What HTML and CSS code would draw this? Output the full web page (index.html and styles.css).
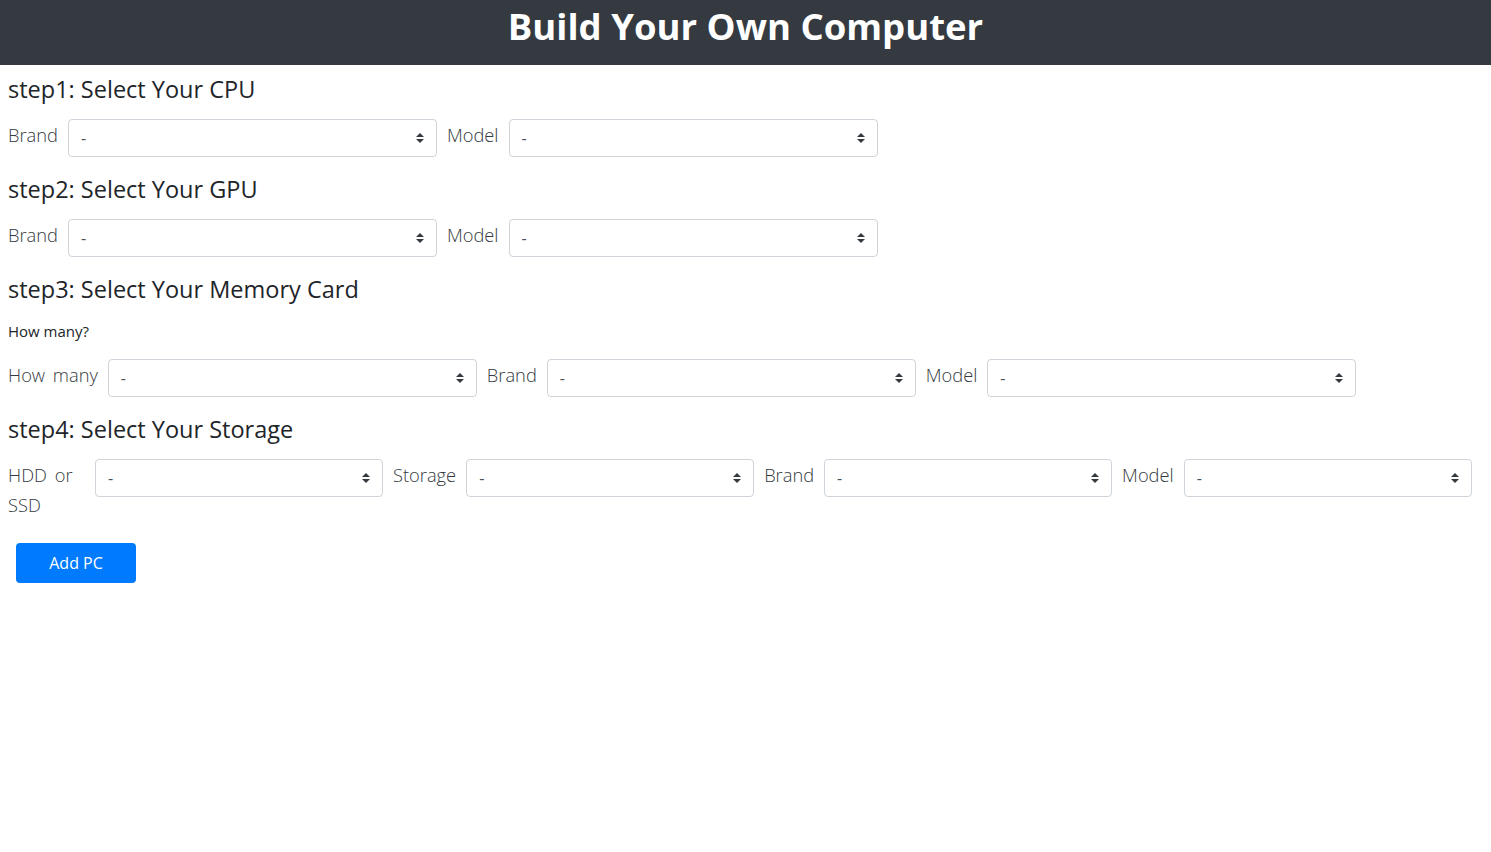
FILE: index.html
```html
<!DOCTYPE html>
<html lang="en">
<head>
<meta charset="utf-8">
<title>Build Your Own Computer</title>
<link rel="stylesheet" href="styles.css">
</head>
<body>
<header class="topbar">
  <h1 class="title">Build Your Own Computer</h1>
</header>
<main class="page">
  <section class="step">
    <h4 class="step-title">step1: Select Your CPU</h4>
    <div class="row">
      <label class="lbl">Brand</label>
      <span class="sel"><select><option>-</option></select><svg class="caret" viewBox="0 0 4 5" width="8" height="10"><path d="M2 0L0 2h4zm0 5L0 3h4z"/></svg></span>
      <label class="lbl">Model</label>
      <span class="sel"><select><option>-</option></select><svg class="caret" viewBox="0 0 4 5" width="8" height="10"><path d="M2 0L0 2h4zm0 5L0 3h4z"/></svg></span>
    </div>
  </section>
  <section class="step">
    <h4 class="step-title">step2: Select Your GPU</h4>
    <div class="row">
      <label class="lbl">Brand</label>
      <span class="sel"><select><option>-</option></select><svg class="caret" viewBox="0 0 4 5" width="8" height="10"><path d="M2 0L0 2h4zm0 5L0 3h4z"/></svg></span>
      <label class="lbl">Model</label>
      <span class="sel"><select><option>-</option></select><svg class="caret" viewBox="0 0 4 5" width="8" height="10"><path d="M2 0L0 2h4zm0 5L0 3h4z"/></svg></span>
    </div>
  </section>
  <section class="step">
    <h4 class="step-title">step3: Select Your Memory Card</h4>
    <p class="small-q">How many?</p>
    <div class="row">
      <label class="lbl">How many</label>
      <span class="sel"><select><option>-</option></select><svg class="caret" viewBox="0 0 4 5" width="8" height="10"><path d="M2 0L0 2h4zm0 5L0 3h4z"/></svg></span>
      <label class="lbl">Brand</label>
      <span class="sel"><select><option>-</option></select><svg class="caret" viewBox="0 0 4 5" width="8" height="10"><path d="M2 0L0 2h4zm0 5L0 3h4z"/></svg></span>
      <label class="lbl">Model</label>
      <span class="sel"><select><option>-</option></select><svg class="caret" viewBox="0 0 4 5" width="8" height="10"><path d="M2 0L0 2h4zm0 5L0 3h4z"/></svg></span>
    </div>
  </section>
  <section class="step">
    <h4 class="step-title">step4: Select Your Storage</h4>
    <div class="row row-storage">
      <label class="lbl lbl-wrap">HDD or SSD</label>
      <span class="sel sel-narrow"><select><option>-</option></select><svg class="caret" viewBox="0 0 4 5" width="8" height="10"><path d="M2 0L0 2h4zm0 5L0 3h4z"/></svg></span>
      <label class="lbl">Storage</label>
      <span class="sel sel-narrow"><select><option>-</option></select><svg class="caret" viewBox="0 0 4 5" width="8" height="10"><path d="M2 0L0 2h4zm0 5L0 3h4z"/></svg></span>
      <label class="lbl">Brand</label>
      <span class="sel sel-narrow"><select><option>-</option></select><svg class="caret" viewBox="0 0 4 5" width="8" height="10"><path d="M2 0L0 2h4zm0 5L0 3h4z"/></svg></span>
      <label class="lbl">Model</label>
      <span class="sel sel-narrow"><select><option>-</option></select><svg class="caret" viewBox="0 0 4 5" width="8" height="10"><path d="M2 0L0 2h4zm0 5L0 3h4z"/></svg></span>
    </div>
  </section>
  <button class="btn-add" type="button">Add PC</button>
</main>
</body>
</html>
```

FILE: styles.css
```css
* { box-sizing: border-box; }
html, body { margin: 0; padding: 0; background: #fff; }
body {
  font-family: "Open Sans", "Noto Sans", sans-serif;
  color: #212529;
  font-size: 16px;
  line-height: 1.5;
}
.topbar {
  background: #343a40;
  height: 65px;
  display: flex;
  justify-content: center;
}
.title {
  margin: 0;
  color: #fff;
  font-size: 36.5px;
  font-weight: 700;
  line-height: 53px;
}
.page {
  padding: 10px 8px 0 8px;
}
.step { margin-bottom: 18px; }
.step-title {
  margin: 0 0 16px 0;
  font-size: 23.5px;
  font-weight: 400;
  line-height: 28px;
}
.small-q {
  margin: -13px 0 0 0;
  font-size: 15px;
  line-height: 21px;
  padding: 15px 0 17px 0;
}
.row {
  display: flex;
  align-items: flex-start;
}
.lbl {
  flex: 0 0 auto;
  font-size: 18.3px;
  font-weight: 300;
  line-height: 30px;
  word-spacing: 3px;
  margin: 1px 10px 0 0;
  color: #343a40;
  white-space: nowrap;
}
.lbl-wrap { white-space: normal; width: 77px; }
.sel {
  position: relative;
  display: block;
  width: 369px;
  height: 38px;
  margin-right: 10px;
  flex: 0 0 auto;
}
.sel-narrow { width: 288px; flex: 0 1 auto; }
.sel select {
  -webkit-appearance: none;
  appearance: none;
  width: 100%;
  height: 38px;
  border: 1px solid #ced4da;
  border-radius: 4px;
  background: #fff;
  padding: 6px 28px 6px 12px;
  font-family: inherit;
  font-size: 16px;
  color: #495057;
}
.caret {
  position: absolute;
  right: 13px;
  top: 14px;
  fill: #343a40;
  pointer-events: none;
}
.btn-add {
  margin: 5px 0 0 8px;
  width: 120px;
  height: 40px;
  border: 0;
  border-radius: 4px;
  background: #007bff;
  color: #fff;
  font-family: inherit;
  font-size: 16px;
}
```
